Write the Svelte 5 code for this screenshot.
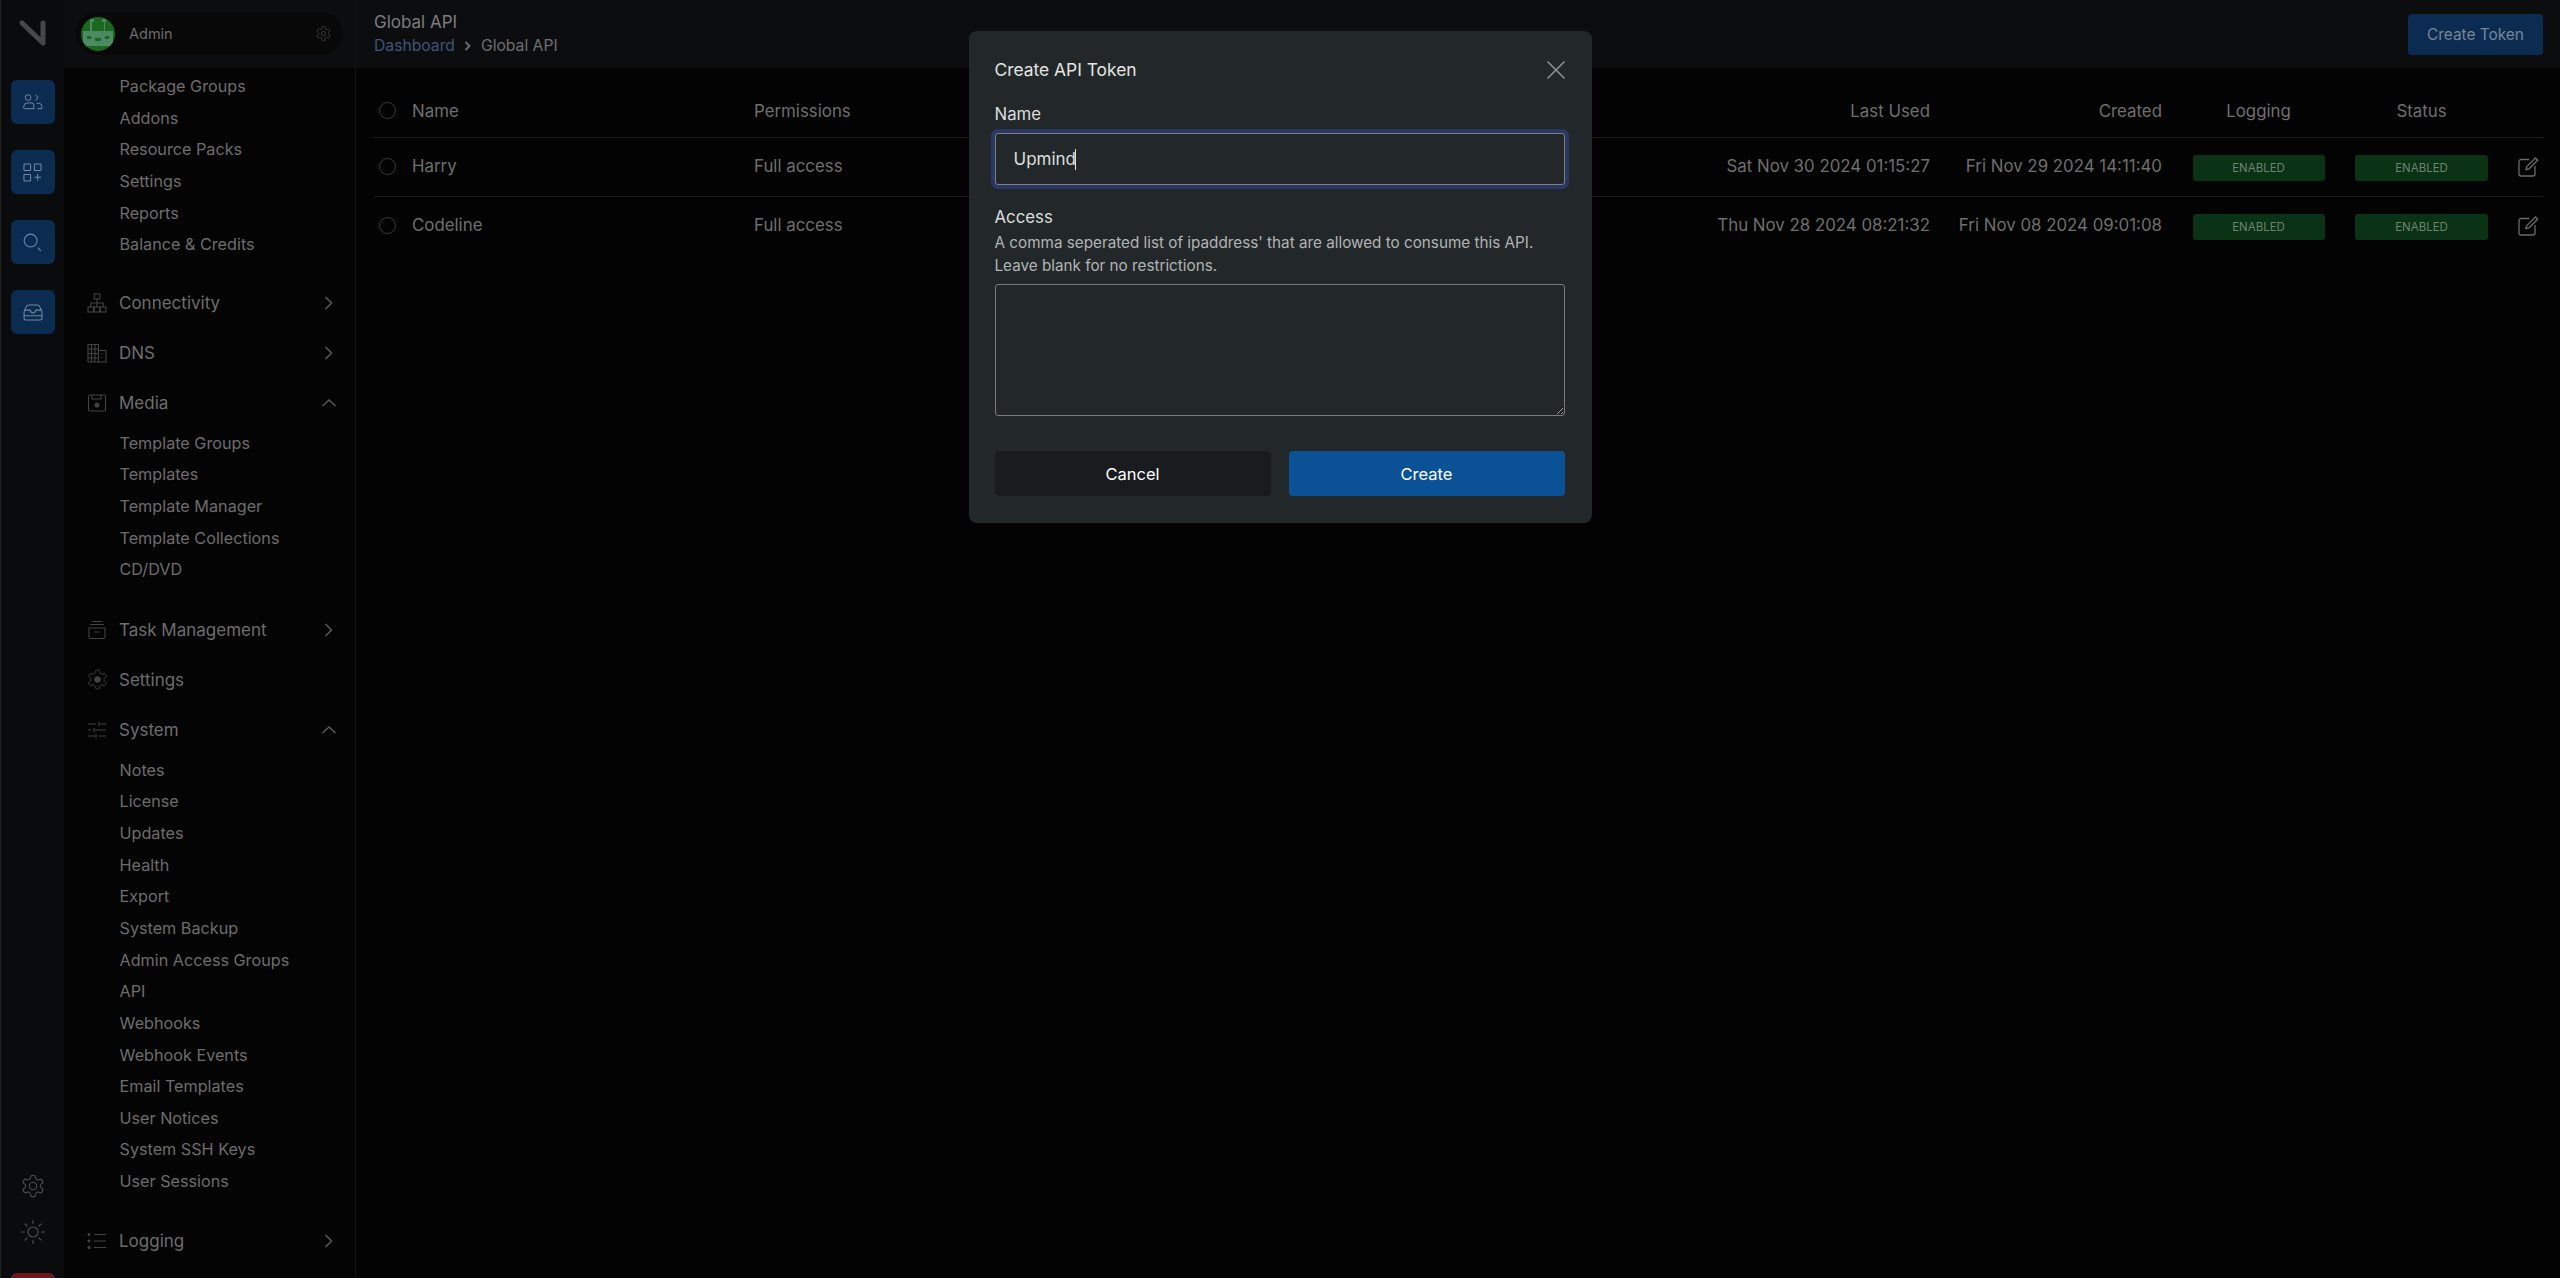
<script>
	const icons = {
		network: '<rect x="7.2" y="1" width="5.6" height="5" /><rect x="1" y="14" width="5.6" height="5" /><rect x="13.4" y="14" width="5.6" height="5" /><rect x="7.2" y="14" width="5.6" height="5" /><path d="M10 6v8M3.8 14v-4h12.4v4" />',
		building: '<path d="M1 19V1.5h10.5V19M11.5 7.5H19V19H1" /><path d="M1 6h10.5M1 10.5h10.5M1 15h10.5M4.5 1.5V19M8 1.5V19M14.5 11h1M14.5 15h1" />',
		floppy: '<path d="M3 2h14a1.5 1.5 0 0 1 1.5 1.5v13A1.5 1.5 0 0 1 17 18H3a1.5 1.5 0 0 1-1.5-1.5v-13A1.5 1.5 0 0 1 3 2z" /><path d="M5 2v4h9V2" /><circle cx="10" cy="12" r="2" fill="currentColor" />',
		archive: '<path d="M5 1.5h10M3 4.5h14M2 8h16v9a1.5 1.5 0 0 1-1.5 1.5h-13A1.5 1.5 0 0 1 2 17zM7.5 12h5" />',
		sliders: '<path d="M1 4h8M13 4h6M12 1.5V6M1 10h3M8 10h11M7 8v4.500M1 16h7M12 16h7M9 14v4.500" />',
		list: '<path d="M7 3.500h12M7 10h12M7 16.500h12" /><circle cx="2" cy="3.500" r="1" fill="currentColor" /><circle cx="2" cy="10" r="1" fill="currentColor" /><circle cx="2" cy="16.500" r="1" fill="currentColor" />'
	};
	const gear = 'M12.22 2h-.44a2 2 0 0 0-2 2v.18a2 2 0 0 1-1 1.73l-.43.25a2 2 0 0 1-2 0l-.15-.08a2 2 0 0 0-2.73.73l-.22.38a2 2 0 0 0 .73 2.73l.15.1a2 2 0 0 1 1 1.72v.51a2 2 0 0 1-1 1.74l-.15.09a2 2 0 0 0-.73 2.73l.22.38a2 2 0 0 0 2.73.73l.15-.08a2 2 0 0 1 2 0l.43.25a2 2 0 0 1 1 1.73V20a2 2 0 0 0 2 2h.44a2 2 0 0 0 2-2v-.18a2 2 0 0 1 1-1.73l.43-.25a2 2 0 0 1 2 0l.15.08a2 2 0 0 0 2.73-.73l.22-.39a2 2 0 0 0-.73-2.73l-.15-.08a2 2 0 0 1-1-1.74v-.5a2 2 0 0 1 1-1.74l.15-.09a2 2 0 0 0 .73-2.73l-.22-.38a2 2 0 0 0-2.73-.73l-.15.08a2 2 0 0 1-2 0l-.43-.25a2 2 0 0 1-1-1.73V4a2 2 0 0 0-2-2z';

	const nav = [
		{ items: ['Package Groups', 'Addons', 'Resource Packs', 'Settings', 'Reports', 'Balance & Credits'] },
		{ label: 'Connectivity', icon: 'network', arrow: 'right' },
		{ label: 'DNS', icon: 'building', arrow: 'right' },
		{ label: 'Media', icon: 'floppy', arrow: 'up', items: ['Template Groups', 'Templates', 'Template Manager', 'Template Collections', 'CD/DVD'] },
		{ label: 'Task Management', icon: 'archive', arrow: 'right' },
		{ label: 'Settings', icon: 'gear' },
		{ label: 'System', icon: 'sliders', arrow: 'up', items: ['Notes', 'License', 'Updates', 'Health', 'Export', 'System Backup', 'Admin Access Groups', 'API', 'Webhooks', 'Webhook Events', 'Email Templates', 'User Notices', 'System SSH Keys', 'User Sessions'] },
		{ label: 'Logging', icon: 'list', arrow: 'right' }
	];

	const tokens = [
		{ name: 'Harry', perms: 'Full access', used: 'Sat Nov 30 2024 01:15:27', created: 'Fri Nov 29 2024 14:11:40' },
		{ name: 'Codeline', perms: 'Full access', used: 'Thu Nov 28 2024 08:21:32', created: 'Fri Nov 08 2024 09:01:08' }
	];
</script>

<div class="app">
	<aside class="rail">
		<div class="logo">
			<svg width="30" height="30" viewBox="0 0 30 30" fill="none" stroke="#45484b" stroke-width="5" stroke-linecap="round" stroke-linejoin="round"><path d="M4 4 L25 24 V4" /></svg>
		</div>
		<button class="rail-btn" aria-label="Users">
			<svg width="20" height="16" viewBox="0 0 22 18" fill="none" stroke="currentColor" stroke-width="1.100"><circle cx="5.500" cy="4" r="3.200" /><path d="M14 1.200a3.200 3.200 0 0 1 0 6M5 10h4a3 3 0 0 1 3 3v3.500H1.500a1 1 0 0 1-1-1V14.500A4.500 4.500 0 0 1 5 10zM15 10.500h2.500a3.500 3.500 0 0 1 3.500 3.500v2.500h-5" /></svg>
		</button>
		<button class="rail-btn" aria-label="Add">
			<svg width="19" height="19" viewBox="0 0 20 20" fill="none" stroke="currentColor" stroke-width="1.100"><rect x="1" y="1" width="7" height="7" rx=".8" /><rect x="12" y="1" width="7" height="7" rx=".8" /><rect x="1" y="12" width="7" height="7" rx=".8" /><path d="M15.500 11.500v7M12 15h7" /></svg>
		</button>
		<button class="rail-btn" aria-label="Search">
			<svg width="19" height="19" viewBox="0 0 20 20" fill="none" stroke="currentColor" stroke-width="1.100"><circle cx="8" cy="8" r="6.800" /><path d="M15.500 15.500l3.300 3.300" /></svg>
		</button>
		<button class="rail-btn" aria-label="Inbox">
			<svg width="20" height="17" viewBox="0 0 20 18" fill="none" stroke="currentColor" stroke-width="1.100"><path d="M.5 8.500V15a2 2 0 0 0 2 2h15a2 2 0 0 0 2-2V8.500a2 2 0 0 0-2-2H13c-.5 2-1.500 3-3 3s-2.500-1-3-3H2.500a2 2 0 0 0-2 2zM.8 7.500L3 2.500A3 3 0 0 1 5.500 1h9A3 3 0 0 1 17 2.500l2.200 5M.5 12.500h19" /></svg>
		</button>
		<div class="rail-spacer"></div>
		<svg class="rail-tool" width="26" height="26" viewBox="0 0 24 24" fill="none" stroke="currentColor" stroke-width="1"><path d={gear} /><circle cx="12" cy="12" r="3.400" /></svg>
		<svg class="rail-tool sun" width="26" height="26" viewBox="0 0 26 26" fill="none" stroke="currentColor" stroke-width="1.200" stroke-linecap="round"><circle cx="13" cy="13" r="5" /><path d="M13 1.500v3M13 21.500v3M1.500 13h3M21.500 13h3M4.900 4.900L7 7M19 19l2.100 2.100M4.900 21.100L7 19M19 7l2.100-2.100" /></svg>
		<div class="rail-red"></div>
	</aside>

	<aside class="sidebar">
		<div class="side-head">
			<div class="pill">
				<svg class="avatar" width="34" height="34" viewBox="0 0 34 34">
					<defs><clipPath id="avatar-clip"><circle cx="17" cy="17" r="17" /></clipPath></defs>
					<circle cx="17" cy="17" r="17" fill="#1a671d" />
					<path clip-path="url(#avatar-clip)" fill="#4b8a62" d="M9 2h4v3h-2v9h12V5h-2V2h4v3h-1v9h8v15H2V14h7V5H9zM6 19v3h4v-3zM24 19v3h4v-3zM14 21v3h6v-3z" />
				</svg>
				<span class="pill-name">Admin</span>
				<svg class="pill-gear" width="17" height="17" viewBox="0 0 24 24" fill="none" stroke="currentColor" stroke-width="1.400"><path d={gear} /><circle cx="12" cy="12" r="3" /></svg>
			</div>
		</div>
		<nav class="nav">
			{#each nav as group}
				<div class="group">
					{#if group.label}
						<div class="heading">
							{#if group.icon === 'gear'}
								<svg class="nav-gear" width="23" height="23" viewBox="0 0 24 24" fill="none" stroke="currentColor" stroke-width="1">
									<path d={gear} /><circle cx="12" cy="12" r="3" fill="currentColor" />
								</svg>
							{:else}
								<svg class="nav-icon" width="20" height="20" viewBox="0 0 20 20" fill="none" stroke="currentColor" stroke-width="1.100">
									{@html icons[group.icon]}
								</svg>
							{/if}
							<span>{group.label}</span>
							{#if group.arrow === 'right'}
								<svg class="arrow" width="10" height="16" viewBox="0 0 10 16" fill="none" stroke="currentColor" stroke-width="1.500"><path d="M1.500 2l6 6-6 6" /></svg>
							{:else if group.arrow === 'up'}
								<svg class="arrow" width="16" height="10" viewBox="0 0 16 10" fill="none" stroke="currentColor" stroke-width="1.500"><path d="M1.500 8l6.500-6 6.500 6" /></svg>
							{/if}
						</div>
					{/if}
					{#if group.items}
						<ul class="sub">
							{#each group.items as item}
								<li>{item}</li>
							{/each}
						</ul>
					{/if}
				</div>
			{/each}
		</nav>
	</aside>

	<main class="main">
		<header class="top">
			<div>
				<div class="page-title">Global API</div>
				<div class="crumbs">
					<span class="crumb-link">Dashboard</span>
					<svg width="8" height="10" viewBox="0 0 8 10" fill="none" stroke="currentColor" stroke-width="1.800"><path d="M1.500 1l4 4-4 4" /></svg>
					<span>Global API</span>
				</div>
			</div>
			<button class="create-token">Create Token</button>
		</header>

		<section class="table">
			<div class="row head">
				<span class="check"></span>
				<span>Name</span>
				<span>Permissions</span>
				<span class="right">Last Used</span>
				<span class="right">Created</span>
				<span class="center">Logging</span>
				<span class="center">Status</span>
				<span></span>
			</div>
			{#each tokens as t}
				<div class="row">
					<span class="check"></span>
					<span>{t.name}</span>
					<span>{t.perms}</span>
					<span class="right">{t.used}</span>
					<span class="right">{t.created}</span>
					<span class="center"><span class="badge log">ENABLED</span></span>
					<span class="center"><span class="badge">ENABLED</span></span>
					<span class="edit">
						<svg width="21" height="20" viewBox="0 0 21 20" fill="none" stroke="currentColor" stroke-width="1.300"><path d="M11 2.500H3a2 2 0 0 0-2 2V17a2 2 0 0 0 2 2h12a2 2 0 0 0 2-2V9" /><path d="M8 12.500l.8-3L17.500 1l2.200 2.200L11 11.800z" /></svg>
					</span>
				</div>
			{/each}
		</section>
	</main>

	<div class="overlay">
		<form class="modal" onsubmit={(e) => e.preventDefault()}>
			<div class="modal-head">
				<h2>Create API Token</h2>
				<svg class="close" width="20" height="20" viewBox="0 0 20 20" fill="none" stroke="currentColor" stroke-width="1.600"><path d="M1.500 1.500l17 17M18.500 1.500l-17 17" /></svg>
			</div>
			<label for="token-name">Name</label>
			<div class="input-wrap">
				<input id="token-name" value="Upmind" />
				<span class="caret"></span>
			</div>
			<label for="token-access" class="access-label">Access</label>
			<p class="hint">A comma seperated list of ipaddress' that are allowed to consume this API.<br />Leave blank for no restrictions.</p>
			<textarea id="token-access"></textarea>
			<div class="actions">
				<button type="button" class="cancel">Cancel</button>
				<button type="submit" class="create">Create</button>
			</div>
		</form>
	</div>
</div>

<style>
	:global(body) {
		margin: 0;
		background: #030303;
	}

	.app {
		display: flex;
		height: 1278px;
		overflow: hidden;
		font-family: Inter, "Liberation Sans", sans-serif;
		font-size: 16px;
		color: #6d6d6d;
	}

	.rail {
		width: 63px;
		flex-shrink: 0;
		display: flex;
		flex-direction: column;
		align-items: center;
		background: #090b0d;
		border-left: 1px solid #222;
		overflow: hidden;
	}

	.logo {
		height: 68px;
		display: flex;
		align-items: center;
		justify-content: center;
		flex-shrink: 0;
		margin-left: 1px;
	}

	.rail-btn {
		width: 44px;
		height: 44px;
		flex-shrink: 0;
		margin: 12px 0 14px;
		padding: 0;
		display: flex;
		align-items: center;
		justify-content: center;
		border: none;
		border-radius: 6px;
		background: #0c2b50;
		color: #7389a3;
	}

	.rail-spacer {
		flex: 1;
	}

	.rail-tool {
		flex-shrink: 0;
		color: #4e4e4e;
	}

	.sun {
		margin-top: 20px;
	}

	.rail-red {
		width: 44px;
		height: 44px;
		flex-shrink: 0;
		margin: 28px 0 -39px;
		border-radius: 6px 6px 0 0;
		background: #6a1a1c;
	}

	.sidebar {
		width: 291px;
		flex-shrink: 0;
		display: flex;
		flex-direction: column;
		background: #040404;
		border-right: 1px solid #121212;
		overflow: hidden;
	}

	.side-head {
		height: 68px;
		flex-shrink: 0;
		padding: 12px;
		box-sizing: border-box;
		background: #0b0d0f;
	}

	.pill {
		height: 43px;
		display: flex;
		align-items: center;
		padding: 0 11px 0 5px;
		border-radius: 22px;
		background: #080808;
	}

	.avatar {
		flex-shrink: 0;
	}

	.pill-name {
		margin-left: 14px;
		font-size: 14.5px;
		color: #6b6b6b;
	}

	.pill-gear {
		margin-left: auto;
		color: #3e3e3e;
	}

	.nav {
		padding-top: 3px;
	}

	.group:first-child {
		margin-bottom: -1.700px;
	}

	.heading {
		height: 50px;
		display: flex;
		align-items: center;
		padding-left: 23px;
		font-size: 17px;
		position: relative;
	}

	.nav-icon {
		flex-shrink: 0;
		margin-right: 12px;
		color: #434343;
	}

	.nav-gear {
		flex-shrink: 0;
		margin: 0 10.500px 0 -1.500px;
		color: #434343;
	}

	.arrow {
		position: absolute;
		left: 265px;
		top: 50%;
		transform: translate(-50%, -50%);
		color: #5a5a5a;
	}

	.sub {
		list-style: none;
		margin: 0 0 18.700px;
		padding: 0 0 0 55.500px;
	}

	.sub li {
		height: 31.650px;
		line-height: 31.650px;
		font-size: 16.200px;
		white-space: nowrap;
	}

	.main {
		flex: 1;
		min-width: 0;
		display: flex;
		flex-direction: column;
	}

	.top {
		height: 68px;
		flex-shrink: 0;
		box-sizing: border-box;
		display: flex;
		align-items: center;
		justify-content: space-between;
		padding: 0 17px 0 18px;
		background: #0b0d0f;
	}

	.page-title {
		font-size: 17px;
		line-height: 24px;
		color: #7c7c7c;
	}

	.crumbs {
		display: flex;
		align-items: center;
		gap: 9px;
		font-size: 15.700px;
		line-height: 24px;
		color: #6f6f6f;
	}

	.crumb-link {
		color: #3f5576;
	}

	.create-token {
		width: 135px;
		height: 41px;
		padding: 0;
		border: none;
		border-radius: 4px;
		background: #0c2b50;
		color: #77869a;
		font: inherit;
		font-size: 15.400px;
	}

	.table {
		margin: 16px 17px 0 18px;
	}

	.row {
		display: grid;
		grid-template-columns: 38px 342px 946px 230px 232px 193px 133px 55px;
		align-items: center;
		height: 59px;
		box-sizing: border-box;
		padding-bottom: 2px;
		border-bottom: 1px solid #1c1c1c;
		color: #6f6f6f;
		font-size: 16.850px;
		white-space: nowrap;
	}

	.row.head {
		height: 54px;
		padding-bottom: 0;
	}

	.row:last-child {
		border-bottom-color: transparent;
	}

	.check {
		width: 17px;
		height: 17px;
		margin-left: 5px;
		box-sizing: border-box;
		border: 1px solid #3c3c3c;
		border-radius: 50%;
	}

	.right {
		text-align: right;
	}

	.center {
		text-align: center;
	}

	.badge {
		display: block;
		width: 133px;
		height: 26px;
		margin: 4px auto 0;
		border-radius: 3px;
		background: #0a3214;
		color: #6d8271;
		font-size: 11.500px;
		line-height: 26px;
		text-align: center;
	}

	.badge.log {
		width: 132px;
	}

	.edit {
		display: flex;
		justify-content: flex-end;
		padding: 2px 4px 0 0;
		color: #6a6a6a;
	}

	.overlay {
		position: fixed;
		inset: 0;
		display: flex;
		justify-content: center;
		align-items: flex-start;
		padding-top: 31px;
	}

	.modal {
		width: 623px;
		box-sizing: border-box;
		padding: 26px 27px 27px 26px;
		border-radius: 8px;
		background: #222829;
		color: #dcdcdc;
	}

	.modal-head {
		display: flex;
		align-items: center;
		justify-content: space-between;
		height: 25px;
		margin-bottom: 21px;
	}

	h2 {
		margin: 0;
		font-size: 17.400px;
		font-weight: 400;
		color: #e4e4e4;
	}

	.close {
		color: #8d9192;
		margin-right: -1px;
	}

	label {
		display: block;
		font-size: 16.800px;
		line-height: 22px;
		color: #dedede;
	}

	.input-wrap {
		position: relative;
		margin-top: 8px;
	}

	input {
		display: block;
		width: 100%;
		height: 52px;
		box-sizing: border-box;
		padding: 0 18px;
		border: 1px solid #7d7f81;
		border-radius: 3px;
		outline: none;
		box-shadow: 0 0 0 4px #2a3764;
		background: #222829;
		color: #dedede;
		font: inherit;
		font-size: 17px;
	}

	.caret {
		position: absolute;
		left: 80px;
		top: 16px;
		width: 1px;
		height: 21px;
		background: #e4e4e4;
	}

	.access-label {
		margin-top: 21px;
	}

	.hint {
		margin: 3px 0 7px;
		font-size: 15.250px;
		line-height: 23px;
		color: #b2b4b4;
	}

	textarea {
		display: block;
		width: 100%;
		height: 132px;
		box-sizing: border-box;
		border: 1px solid #77797b;
		border-radius: 3px;
		outline: none;
		background: transparent;
		resize: vertical;
	}

	.actions {
		display: grid;
		grid-template-columns: 276px 276px;
		justify-content: space-between;
		margin-top: 35px;
	}

	.actions button {
		height: 45px;
		padding: 0;
		border: none;
		border-radius: 4px;
		color: #fff;
		font: inherit;
		font-size: 16.500px;
	}

	.cancel {
		background: #181c1f;
	}

	.create {
		background: #0b5196;
	}
</style>
